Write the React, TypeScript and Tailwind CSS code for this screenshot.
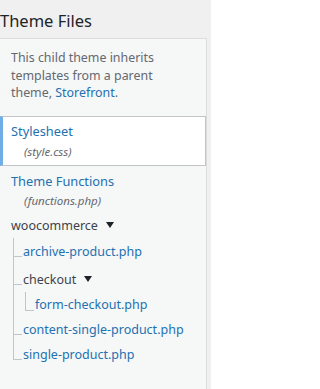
import React from 'react';

const line = 'border-[#c3c4c7]';

function Connector({ top, last }: { top: number; last?: boolean }) {
  return (
    <div className="flex flex-col w-[9px] shrink-0">
      <div className={`border-l border-b ${line}`} style={{ height: top }} />
      {!last && <div className={`flex-1 border-l ${line}`} />}
    </div>
  );
}

function FileRow({ name, top, pt, pb, last }: { name: string; top: number; pt: number; pb: number; last?: boolean }) {
  return (
    <li className="flex">
      <Connector top={top} last={last} />
      <a className="pl-px text-[12.5px] leading-[18px] text-[#2271b1] whitespace-nowrap" style={{ paddingTop: pt, paddingBottom: pb }}>
        {name}
      </a>
    </li>
  );
}

function Caret() {
  return <span className="inline-block ml-[8px] mb-[2px] align-middle border-x-4 border-x-transparent border-t-[6px] border-t-[#1d2327]" />;
}

export default function App() {
  return (
    <div className="w-[211px] h-[389px] bg-[#f0f0f1] overflow-hidden font-['Noto_Sans',sans-serif]">
      <div className="pt-[9px] mb-[6px] text-[16.5px] leading-[23px] text-[#1d2327]">Theme Files</div>

      <div className="w-[207px] h-[400px] bg-[#f6f7f7] border-t border-r border-[#dcdcde]">
        <p className="px-[11px] pt-[10px] mb-[14px] text-[12.4px] leading-[17.5px] text-[#646970]">
          This child theme inherits templates from a parent theme, <span className="text-[#2271b1]">Storefront</span>.
        </p>

        <ul>
          {/* current file */}
          <li className="h-[50px] bg-white border-y border-r border-[#c3c4c7] border-l-[3px] border-l-[#72aee6] pl-[8px] pt-[5px]">
            <div className="text-[12.8px] leading-[18px] text-[#2271b1]">Stylesheet</div>
            <div className="mt-[3px] pl-[13px] text-[11.5px] leading-[18px] italic text-[#646970]">(style.css)</div>
          </li>
          <li className="h-[50px] border-y border-transparent pl-[11px] pt-[5px]">
            <div className="text-[12.8px] leading-[18px] text-[#2271b1]">Theme Functions</div>
            <div className="mt-[2px] pl-[13px] text-[11.5px] leading-[18px] italic text-[#646970]">(functions.php)</div>
          </li>

          <li>
            <div className="pl-[11px] pt-px pb-[3px] text-[12.5px] leading-[18px] text-[#3c434a]">
              woocommerce
              <Caret />
            </div>
            <ul className="ml-[13px]">
              <FileRow name="archive-product.php" top={19} pt={5} pb={3} />
              <li className="flex">
                <Connector top={21} />
                <div>
                  <div className="pl-px pt-[7px] text-[12.5px] leading-[18px] text-[#3c434a] whitespace-nowrap">
                    checkout
                    <Caret />
                  </div>
                  <ul className="ml-[3px] mt-[3px]">
                    <FileRow name="form-checkout.php" top={19} pt={4} pb={2} last />
                  </ul>
                </div>
              </li>
              <FileRow name="content-single-product.php" top={19} pt={5} pb={2} />
              <FileRow name="single-product.php" top={19} pt={5} pb={2} last />
            </ul>
          </li>
        </ul>
      </div>
    </div>
  );
}
